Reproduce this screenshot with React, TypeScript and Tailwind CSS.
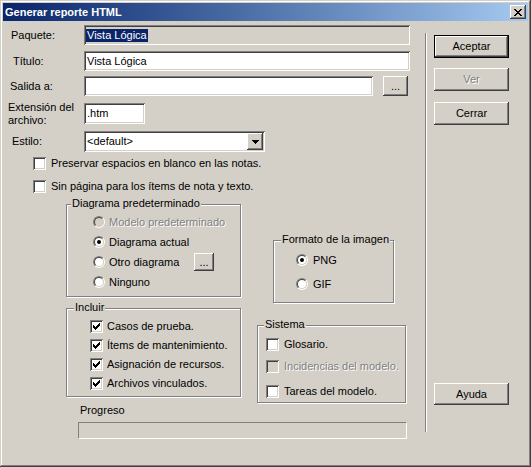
import type { ReactNode } from "react";

// Diálogo clásico de Windows 2000: "Generar reporte HTML".
// Bordes 3D hechos con sombras inset (dos píxeles por lado).
const raised =
  "shadow-[inset_-1px_-1px_#404040,inset_1px_1px_#fff,inset_-2px_-2px_#808080,inset_2px_2px_#d4d0c8]";
const sunken =
  "shadow-[inset_1px_1px_#808080,inset_-1px_-1px_#fff,inset_2px_2px_#404040,inset_-2px_-2px_#d4d0c8]";
const grayText = "text-[#808080] [text-shadow:1px_1px_0_#fff]";

// Marca de verificación clásica, 7×7 píxeles
const CHECK = ["......X", ".....XX", "X...XXX", "XX.XXX.", "XXXXX..", ".XXX...", "..X...."];
// Aspa del botón de cerrar, 8×7 píxeles
const CLOSE = ["XX....XX", ".XX..XX.", "..XXXX..", "...XX...", "..XXXX..", ".XX..XX.", "XX....XX"];

function Pixels({ rows, className }: { rows: string[]; className?: string }) {
  return (
    <svg
      width={rows[0].length}
      height={rows.length}
      viewBox={`0 0 ${rows[0].length} ${rows.length}`}
      shapeRendering="crispEdges"
      className={className}
    >
      {rows.flatMap((r, y) =>
        r.split("").map((c, x) => (c === "X" ? <rect key={`${x}-${y}`} x={x} y={y} width={1} height={1} fill="#000" /> : null))
      )}
    </svg>
  );
}

function Check({ checked, disabled }: { checked?: boolean; disabled?: boolean }) {
  return (
    <span
      className={`flex h-[13px] w-[13px] shrink-0 items-center justify-center ${sunken} ${
        disabled ? "bg-[#d4d0c8]" : "bg-white"
      }`}
    >
      {checked && <Pixels rows={CHECK} />}
    </span>
  );
}

function Radio({ checked, disabled }: { checked?: boolean; disabled?: boolean }) {
  return (
    <span className="flex h-[12px] w-[12px] shrink-0 rounded-full border border-t-[#808080] border-r-white border-b-white border-l-[#808080]">
      <span
        className={`flex flex-1 items-center justify-center rounded-full border border-t-[#404040] border-r-[#d4d0c8] border-b-[#d4d0c8] border-l-[#404040] ${
          disabled ? "bg-[#d4d0c8]" : "bg-white"
        }`}
      >
        {checked && <span className="h-[4px] w-[4px] rounded-full bg-black" />}
      </span>
    </span>
  );
}

function Btn({
  children,
  className = "",
  disabled,
  isDefault,
}: {
  children: ReactNode;
  className?: string;
  disabled?: boolean;
  isDefault?: boolean;
}) {
  return (
    <div className={`${isDefault ? "border border-black" : ""} ${className}`}>
      <div className={`flex h-full w-full items-center justify-center bg-[#d4d0c8] ${raised}`}>
        <span className={disabled ? grayText : ""}>{children}</span>
      </div>
    </div>
  );
}

function Group({
  legend,
  legendPos,
  className,
  children,
}: {
  legend: string;
  legendPos: string;
  className: string;
  children: ReactNode;
}) {
  return (
    <div className={`relative border border-[#808080] shadow-[inset_1px_1px_#fff,1px_1px_#fff] ${className}`}>
      <span className={`absolute -top-[8px] bg-[#d4d0c8] px-[1px] ${legendPos}`}>{legend}</span>
      {children}
    </div>
  );
}

export default function App() {
  return (
    <div
      className={`h-[467px] w-[531px] bg-[#d4d0c8] p-[3px] font-['Liberation_Sans',Arial,sans-serif] text-[11px] leading-[13px] text-black shadow-[inset_-1px_-1px_#404040,inset_1px_1px_#d4d0c8,inset_-2px_-2px_#808080,inset_2px_2px_#fff]`}
    >
      {/* Barra de título */}
      <div className="flex h-[18px] items-center justify-between bg-linear-to-r from-[#0a246a] to-[#a6caf0] px-[2px]">
        <span className="font-bold text-white">Generar reporte HTML</span>
        <div className={`flex h-[14px] w-[16px] items-center justify-center bg-[#d4d0c8] ${raised}`}>
          <Pixels rows={CLOSE} />
        </div>
      </div>

      <div className="flex h-[443px]">
        {/* Columna izquierda */}
        <div className="flex w-[422px] flex-col">
          <div className="mt-[4px] flex h-[20px] items-center">
            <span className="w-[81px] pl-[8px]">Paquete:</span>
            <div className={`flex h-[20px] w-[326px] items-center bg-[#d4d0c8] pl-[2px] ${sunken}`}>
              <span className="bg-[#0a246a] px-[1px] text-white">Vista Lógica</span>
            </div>
          </div>

          <div className="mt-[6px] flex h-[20px] items-center">
            <span className="w-[81px] pl-[10px]">Título:</span>
            <div className={`flex h-[20px] w-[326px] items-center bg-white pl-[3px] ${sunken}`}>Vista Lógica</div>
          </div>

          <div className="mt-[5px] flex h-[20px] items-center">
            <span className="w-[81px] pl-[7px]">Salida a:</span>
            <div className={`h-[20px] w-[289px] bg-white ${sunken}`} />
            <Btn className="ml-[10px] h-[20px] w-[25px]">...</Btn>
          </div>

          <div className="mt-[7px] flex h-[21px] items-start">
            <span className="-mt-[2px] w-[81px] pl-[5px]">
              Extensión del
              <br />
              archivo:
            </span>
            <div className={`flex h-[21px] w-[61px] items-center bg-white pl-[3px] ${sunken}`}>.htm</div>
          </div>

          <div className="mt-[7px] flex h-[21px] items-center">
            <span className="w-[81px] pl-[9px]">Estilo:</span>
            <div className={`flex h-[21px] w-[181px] items-center bg-white ${sunken}`}>
              <span className="flex-1 pl-[3px]">&lt;default&gt;</span>
              <div className={`mr-[2px] flex h-[17px] w-[16px] items-center justify-center bg-[#d4d0c8] ${raised}`}>
                <svg width="7" height="4" viewBox="0 0 7 4" shapeRendering="crispEdges">
                  <path d="M0 0h7v1h-1v1h-1v1h-1v1h-1v-1h-1v-1h-1v-1h-1z" fill="#000" />
                </svg>
              </div>
            </div>
          </div>

          <div className="mt-[5px] flex items-center pl-[30px]">
            <Check />
            <span className="ml-[5px]">Preservar espacios en blanco en las notas.</span>
          </div>
          <div className="mt-[10px] flex items-center pl-[30px]">
            <Check />
            <span className="ml-[5px]">Sin página para los ítems de nota y texto.</span>
          </div>

          {/* Grupos */}
          <div className="mt-[11px] flex">
            <div className="ml-[63px] flex w-[175px] flex-col">
              <Group legend="Diagrama predeterminado" legendPos="left-[4px]" className="h-[93px]">
                <div className="flex flex-col pl-[26px] pt-[7px]">
                  <div className="flex h-[20px] items-center">
                    <Radio disabled />
                    <span className={`ml-[4px] ${grayText}`}>Modelo predeterminado</span>
                  </div>
                  <div className="flex h-[20px] items-center">
                    <Radio checked />
                    <span className="ml-[4px]">Diagrama actual</span>
                  </div>
                  <div className="flex h-[20px] items-center">
                    <Radio />
                    <span className="ml-[4px] w-[85px]">Otro diagrama</span>
                    <Btn className="h-[18px] w-[20px]">...</Btn>
                  </div>
                  <div className="flex h-[20px] items-center">
                    <Radio />
                    <span className="ml-[4px]">Ninguno</span>
                  </div>
                </div>
              </Group>

              <Group legend="Incluir" legendPos="left-[7px]" className="mt-[11px] h-[89px]">
                <div className="flex flex-col pl-[23px] pt-[8px]">
                  {["Casos de prueba.", "Ítems de mantenimiento.", "Asignación de recursos.", "Archivos vinculados."].map(
                    (t) => (
                      <div key={t} className="flex h-[19px] items-center">
                        <Check checked />
                        <span className="ml-[4px]">{t}</span>
                      </div>
                    )
                  )}
                </div>
              </Group>
            </div>

            <div className="ml-[16px] mt-[36px] flex flex-col">
              <Group legend="Formato de la imagen" legendPos="left-[7px]" className="ml-[16px] h-[63px] w-[121px]">
                <div className="flex flex-col gap-[4px] pl-[22px] pt-[9px]">
                  <div className="flex h-[20px] items-center">
                    <Radio checked />
                    <span className="ml-[5px]">PNG</span>
                  </div>
                  <div className="flex h-[20px] items-center">
                    <Radio />
                    <span className="ml-[5px]">GIF</span>
                  </div>
                </div>
              </Group>

              <Group legend="Sistema" legendPos="left-[6px]" className="mt-[22px] h-[78px] w-[149px]">
                <div className="flex flex-col pl-[8px] pt-[8px]">
                  <div className="flex h-[20px] items-center">
                    <Check />
                    <span className="ml-[5px]">Glosario.</span>
                  </div>
                  <div className="mt-[2px] flex h-[20px] items-center">
                    <Check disabled />
                    <span className={`ml-[5px] ${grayText}`}>Incidencias del modelo.</span>
                  </div>
                  <div className="mt-[5px] flex h-[20px] items-center">
                    <Check />
                    <span className="ml-[5px]">Tareas del modelo.</span>
                  </div>
                </div>
              </Group>
            </div>
          </div>

          <span className="mt-[1px] pl-[77px]">Progreso</span>
          <div className="ml-[75px] mt-[5px] h-[17px] w-[329px] border border-t-[#808080] border-r-white border-b-white border-l-[#808080]" />
        </div>

        {/* Separador */}
        <div className="mt-[12px] h-[399px] w-[2px] border-l border-[#808080] bg-white" />

        {/* Botones */}
        <div className="ml-[7px] flex w-[75px] flex-col">
          <Btn isDefault className="mt-[14px] h-[23px]">
            Aceptar
          </Btn>
          <Btn disabled className="mt-[10px] h-[23px]">
            Ver
          </Btn>
          <Btn className="mt-[11px] h-[23px]">Cerrar</Btn>
          <Btn className="mt-[258px] h-[22px]">Ayuda</Btn>
        </div>
      </div>
    </div>
  );
}
